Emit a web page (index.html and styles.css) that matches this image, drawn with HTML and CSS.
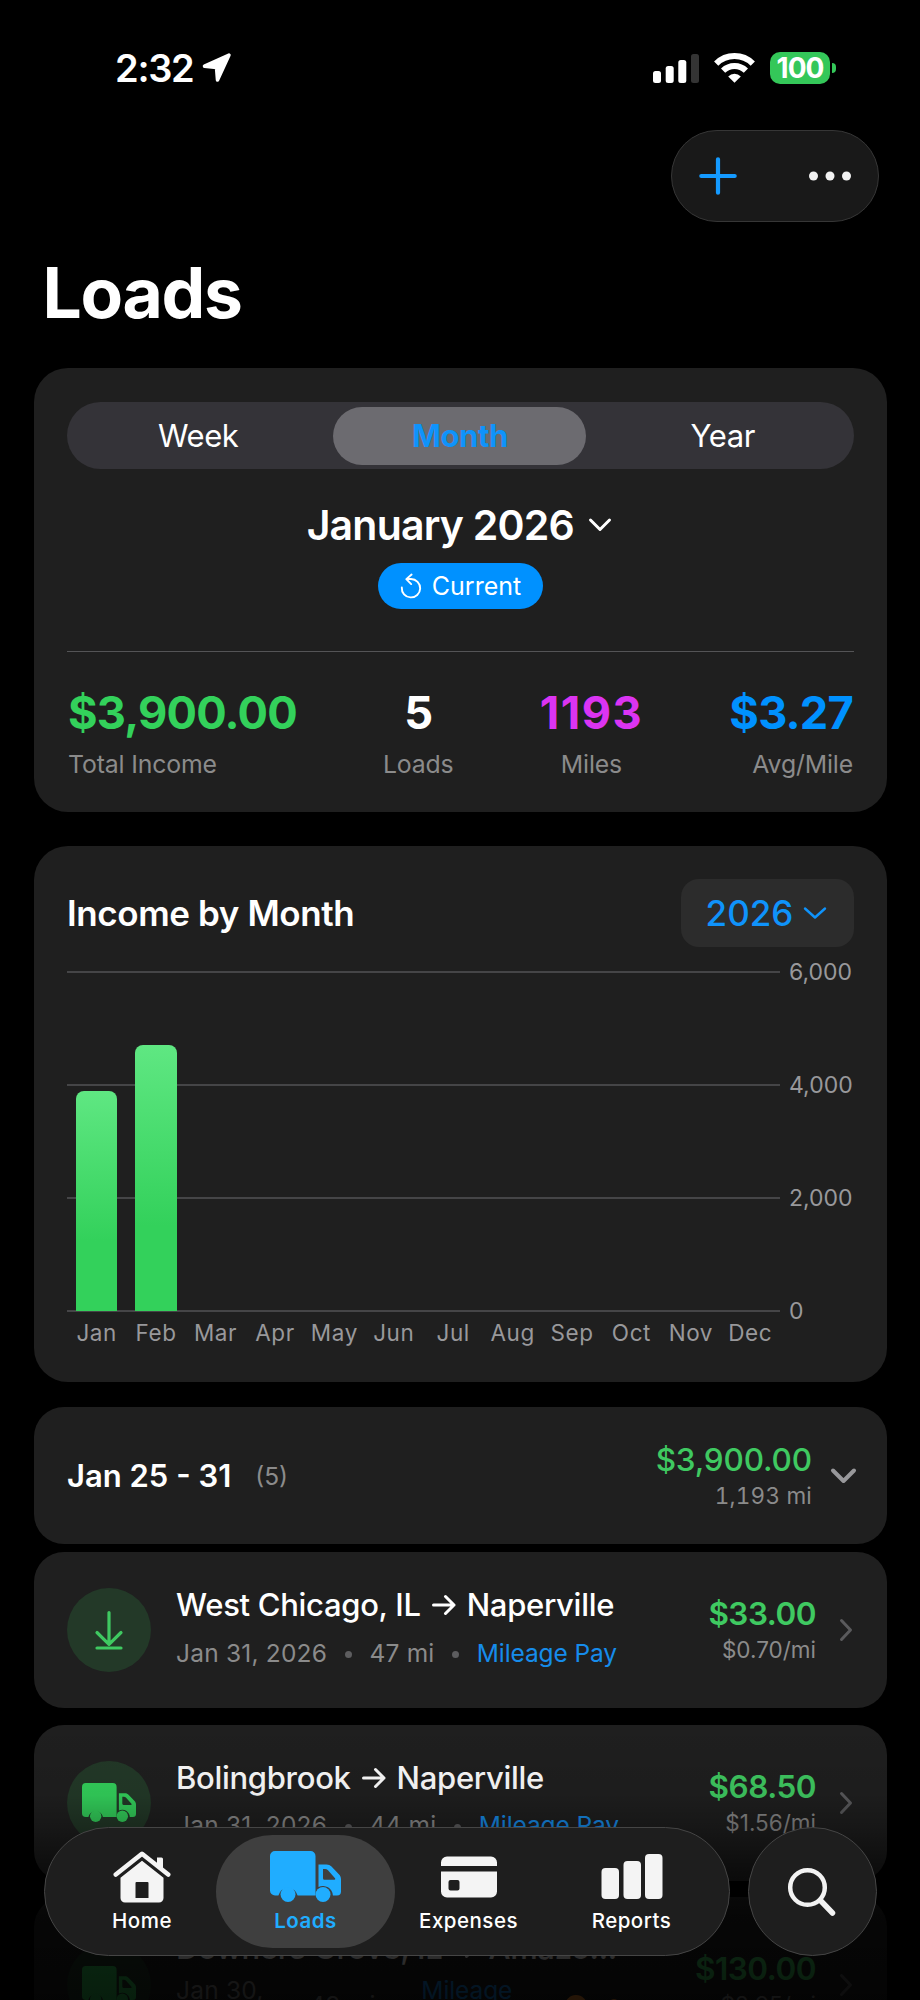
FILE: index.html
```html
<!DOCTYPE html>
<html lang="en">
<head>
<meta charset="utf-8">
<title>Loads</title>
<link rel="stylesheet" href="styles.css">
</head>
<body>
<svg class="defs" width="0" height="0" aria-hidden="true">
  <symbol id="truck" viewBox="0 0 71 51">
    <path fill="currentColor" fill-rule="evenodd" d="M5 0H40.500a5 5 0 0 1 5 5V44.500H27.600A10 10 0 0 0 8.400 44.500H5a5 5 0 0 1-5-5V5a5 5 0 0 1 5-5ZM48.500 13.500H56.500c2 0 3.700.8 5 2.100l7.600 8c1.300 1.400 1.900 2.900 1.900 4.700V40.500a4 4 0 0 1-4 4H62.900A10 10 0 0 0 48.500 36ZM53 18v9.200a1.500 1.500 0 0 0 1.500 1.500H64.500c.8 0 1-.8.5-1.400L58 19.300a4 4 0 0 0-3-1.300Z"/>
    <circle cx="18" cy="43.500" r="7.500" fill="currentColor"/>
    <circle cx="53" cy="43.500" r="7.500" fill="currentColor"/>
  </symbol>
  <symbol id="chev-right" viewBox="0 0 14 24">
    <path d="M2.500 2.500 11.500 12 2.500 21.500" fill="none" stroke="currentColor" stroke-width="3" stroke-linecap="round" stroke-linejoin="round"/>
  </symbol>
  <symbol id="arrow" viewBox="0 0 24 22">
    <path d="M1.500 11H22M13.500 2.500 22 11l-8.500 8.500" fill="none" stroke="currentColor" stroke-width="3" stroke-linecap="round" stroke-linejoin="round"/>
  </symbol>
</svg>

<main class="screen">
  <header class="status">
    <div class="status-left">
      <span class="time">2:32</span>
      <svg width="30" height="30" viewBox="0 0 30 30"><path d="M27 2 2.500 13.200 14.500 14.500 15.500 27Z" fill="#fff" stroke="#fff" stroke-width="3.500" stroke-linejoin="round"/></svg>
    </div>
    <div class="status-right">
      <svg width="46" height="30" viewBox="0 0 46 30"><g fill="#fff"><rect y="18" width="8" height="12" rx="2.500"/><rect x="12.700" y="13" width="8" height="17" rx="2.500"/><rect x="25.300" y="7" width="8" height="23" rx="2.500"/></g><rect x="38" y="1" width="8" height="29" rx="2.500" fill="#343434"/></svg>
      <svg class="wifi" width="41" height="30" viewBox="0 0 41 30"><g fill="none" stroke="#fff" stroke-width="6"><path d="M2.200 10.600a26 26 0 0 1 36.600 0"/><path d="M9.100 17.600a16.300 16.300 0 0 1 22.800 0"/></g><path d="M20.500 29.800 14.200 23.400a9 9 0 0 1 12.600 0Z" fill="#fff"/></svg>
      <div class="battery"><span class="battery-body">100</span><span class="battery-nub"></span></div>
    </div>
  </header>

  <div class="toolbar">
    <div class="toolbar-pill">
      <svg width="38" height="38" viewBox="0 0 38 38"><path d="M19 2.300V35.700M2.300 19H35.700" stroke="#149aff" stroke-width="4.200" stroke-linecap="round"/></svg>
      <svg width="42" height="10" viewBox="0 0 42 10" fill="#f2f2f2"><circle cx="4.500" cy="5" r="4.500"/><circle cx="21" cy="5" r="4.500"/><circle cx="37.500" cy="5" r="4.500"/></svg>
    </div>
  </div>

  <h1 class="title">Loads</h1>

  <section class="card summary">
    <div class="segments">
      <span class="segment">Week</span>
      <span class="segment segment-on">Month</span>
      <span class="segment">Year</span>
    </div>
    <div class="period">
      <span class="period-name">January 2026</span>
      <svg width="24" height="16" viewBox="0 0 24 16"><path d="M2.500 3 12 12.500 21.500 3" fill="none" stroke="#fff" stroke-width="3" stroke-linecap="round" stroke-linejoin="round"/></svg>
    </div>
    <div class="current">
      <svg width="22" height="26" viewBox="0 0 22 26"><path d="M1.800 14.500A9.200 9.200 0 1 0 11 6H6.500M11.600 1.500 6.300 6.100l4.900 5" fill="none" stroke="#fff" stroke-width="1.900" stroke-linecap="round" stroke-linejoin="round"/></svg>
      <span>Current</span>
    </div>
    <div class="divider"></div>
    <div class="stats">
      <div class="stat stat-first"><b class="green">$3,900.00</b><span>Total Income</span></div>
      <div class="stat"><b>5</b><span>Loads</span></div>
      <div class="stat"><b class="purple">1193</b><span>Miles</span></div>
      <div class="stat stat-last"><b class="blue">$3.27</b><span>Avg/Mile</span></div>
    </div>
  </section>

  <section class="card chart-card">
    <div class="chart-head">
      <h2>Income by Month</h2>
      <div class="year"><span>2026</span>
        <svg width="24" height="14" viewBox="0 0 24 14"><path d="M2 2.500 12 11.500 22 2.500" fill="none" stroke="#0f93fb" stroke-width="2.400" stroke-linecap="round" stroke-linejoin="round"/></svg>
      </div>
    </div>
    <div class="chart">
      <div class="plot">
        <div class="lines"><i></i><i></i><i></i><i></i></div>
        <div class="bars">
          <div class="slot"><div class="bar" style="height:220px"></div></div>
          <div class="slot"><div class="bar" style="height:266px"></div></div>
        </div>
      </div>
      <div class="y-axis"><span>6,000</span><span>4,000</span><span>2,000</span><span>0</span></div>
    </div>
    <div class="x-axis"><span>Jan</span><span>Feb</span><span>Mar</span><span>Apr</span><span>May</span><span>Jun</span><span>Jul</span><span>Aug</span><span>Sep</span><span>Oct</span><span>Nov</span><span>Dec</span></div>
  </section>

  <section class="card week">
    <span class="week-name">Jan 25 - 31</span><span class="week-count">(5)</span>
    <div class="week-sum"><b>$3,900.00</b><span class="week-miles">1,193 mi</span></div>
    <svg width="27" height="18" viewBox="0 0 27 18"><path d="M3 3.500 13.500 14 24 3.500" fill="none" stroke="#98989b" stroke-width="4" stroke-linecap="round" stroke-linejoin="round"/></svg>
  </section>

  <article class="card load">
    <div class="badge"><svg width="30" height="40" viewBox="0 0 30 40"><path d="M15 2.500V34M3 22.500 15 34.300 27 22.500M3 38H27" fill="none" stroke="#3fc961" stroke-width="3.200" stroke-linecap="round" stroke-linejoin="round"/></svg></div>
    <div class="load-main">
      <div class="route"><span>West Chicago, IL</span><svg width="24" height="22"><use href="#arrow"/></svg><span>Naperville</span></div>
      <div class="meta"><span>Jan 31, 2026</span><i class="dot"></i><span>47 mi</span><i class="dot"></i><span class="pay">Mileage Pay</span></div>
    </div>
    <div class="price"><b>$33.00</b><span>$0.70/mi</span></div>
    <svg class="chev" width="14" height="24"><use href="#chev-right"/></svg>
  </article>

  <article class="card load">
    <div class="badge"><svg width="54" height="39"><use href="#truck"/></svg></div>
    <div class="load-main">
      <div class="route"><span>Bolingbrook</span><svg width="24" height="22"><use href="#arrow"/></svg><span>Naperville</span></div>
      <div class="meta"><span>Jan 31, 2026</span><i class="dot"></i><span>44 mi</span><i class="dot"></i><span class="pay">Mileage Pay</span></div>
    </div>
    <div class="price"><b>$68.50</b><span>$1.56/mi</span></div>
    <svg class="chev" width="14" height="24"><use href="#chev-right"/></svg>
  </article>

  <article class="card load load-tall">
    <div class="badge"><svg width="54" height="39"><use href="#truck"/></svg></div>
    <div class="load-main">
      <div class="route"><span>Downers Grove, IL</span><svg width="24" height="22"><use href="#arrow"/></svg><span>Amazo...</span></div>
      <div class="meta meta-wrap"><span>Jan 30,<br>2026</span><i class="dot"></i><span>43 mi</span><i class="dot"></i><span class="pay">Mileage<br>Pay</span><svg class="stops" width="60" height="26" viewBox="0 0 60 26"><circle cx="14" cy="12" r="11" fill="#ff9230"/><circle cx="52" cy="10" r="5" fill="#ff9230"/></svg></div>
    </div>
    <div class="price"><b>$130.00</b><span>$2.95/mi</span></div>
    <svg class="chev" width="14" height="24"><use href="#chev-right"/></svg>
  </article>

  <div class="fade"></div>

  <nav class="dock">
    <div class="tabs">
      <div class="tab">
        <svg width="58" height="52" viewBox="0 0 58 52"><path d="M2.800 23.500 29 2.800 55.200 23.500" fill="none" stroke="#f4f4f4" stroke-width="4.600" stroke-linecap="round" stroke-linejoin="round"/><path d="M44 6.500h4.500a1.500 1.500 0 0 1 1.500 1.500V19L44 14Z" fill="#f4f4f4"/><path fill-rule="evenodd" d="M29 9.800 50.500 26.800V47a4.500 4.500 0 0 1-4.500 4.500H12A4.500 4.500 0 0 1 7.500 47V26.800ZM23.500 31a1 1 0 0 0-1 1V47H35.500V32a1 1 0 0 0-1-1Z" fill="#f4f4f4"/></svg>
        <span>Home</span>
      </div>
      <div class="tab tab-on">
        <svg width="71" height="51"><use href="#truck"/></svg>
        <span>Loads</span>
      </div>
      <div class="tab">
        <svg width="56" height="52" viewBox="0 0 56 52"><path d="M6 5.500H50a6 6 0 0 1 6 6V15H0V11.500a6 6 0 0 1 6-6Z" fill="#f4f4f4"/><path fill-rule="evenodd" d="M0 20.500H56V40.500a6 6 0 0 1-6 6H6a6 6 0 0 1-6-6ZM9.500 29a2 2 0 0 0-2 2v6.500a2 2 0 0 0 2 2h7a2 2 0 0 0 2-2V31a2 2 0 0 0-2-2Z" fill="#f4f4f4"/></svg>
        <span>Expenses</span>
      </div>
      <div class="tab">
        <svg width="62" height="52" viewBox="0 0 62 52" fill="#f4f4f4"><rect x=".5" y="17" width="17.500" height="31" rx="4"/><rect x="22.500" y="10" width="17.500" height="38" rx="4"/><rect x="44" y="3" width="17.500" height="45" rx="4"/></svg>
        <span>Reports</span>
      </div>
    </div>
    <div class="search"><svg width="50" height="50" viewBox="0 0 50 50"><circle cx="20.500" cy="20.500" r="17.300" fill="none" stroke="#f2f2f2" stroke-width="4.500"/><path d="M33.500 33.500 45.500 46" stroke="#f2f2f2" stroke-width="5.500" stroke-linecap="round"/></svg></div>
  </nav>
</main>
</body>
</html>
```
FILE: styles.css
```css
* { box-sizing: border-box; }
body { margin: 0; background: #000; }
.defs { display: block; }
svg { flex: none; }

.screen {
  position: relative;
  width: 920px;
  height: 2000px;
  overflow: hidden;
  background: #000;
  color: #fff;
  font-family: Inter, "Liberation Sans", sans-serif;
  white-space: nowrap;
}

.status { display: flex; justify-content: space-between; align-items: center; height: 130px; padding: 6px 84px 0 115px; }
.status-left { display: flex; align-items: center; gap: 9px; }
.time { font-size: 38px; font-weight: 600; line-height: 40px; letter-spacing: -1.300px; }
.status-right { display: flex; align-items: center; }
.wifi { margin: 0 15px 0 15px; }
.battery { display: flex; align-items: center; gap: 2px; }
.battery-body { width: 60px; height: 32px; border-radius: 10px; background: #34c759; font-size: 28px; font-weight: 700; line-height: 32px; text-align: center; letter-spacing: -1px; }
.battery-nub { width: 4px; height: 10px; border-radius: 0 5px 5px 0; background: #34c759; }

.toolbar { display: flex; justify-content: flex-end; padding-right: 41px; }
.toolbar-pill { display: flex; align-items: center; justify-content: space-between; width: 208px; height: 92px; padding: 0 27px 0 26.500px; border: 1.500px solid #363636; border-radius: 46px; background: #191919; }

.title { margin: 0; padding-left: 42.500px; font-size: 69.500px; font-weight: 700; line-height: 142px; letter-spacing: -1.300px; }

.card { margin: 0 33px 0 34px; background: #1f1f1f; border-radius: 34px; }
.summary { height: 444px; margin-top: 4px; padding: 34px 33px 0; }
.segments { display: grid; grid-template-columns: repeat(3, 1fr); align-items: center; height: 67px; border-radius: 34px; background: #343338; font-size: 31px; line-height: 58px; text-align: center; letter-spacing: -.4px; }
.segment-on { justify-self: center; width: 253px; height: 58px; margin-right: 1px; border-radius: 29px; background: #6c6b70; color: #0f93fb; font-weight: 700; }
.period { display: flex; align-items: center; justify-content: center; gap: 14px; height: 50px; margin-top: 31px; padding-right: 2.500px; }
.period-name { font-size: 41px; font-weight: 600; line-height: 50px; letter-spacing: -.8px; }
.current { display: flex; align-items: center; justify-content: center; gap: 10px; width: 165px; height: 46px; margin: 13px auto 0; border-radius: 23px; background: #0091ff; font-size: 25px; line-height: 46px; }
.divider { height: 1px; margin-top: 42px; background: #545456; }
.stats { display: flex; justify-content: space-between; margin-top: 34px; padding: 0 1px; }
.stat { display: flex; flex-direction: column; align-items: center; gap: 9px; color: #8b8b8b; font-size: 24.800px; line-height: 30px; letter-spacing: -.15px; }
.stat b { color: #fff; font-size: 45.200px; line-height: 54px; font-weight: 700; letter-spacing: -.8px; }
.stat-first { align-items: flex-start; }
.stat-last { align-items: flex-end; }
.stat .green { color: #33d15b; }
.stat .purple { color: #db34f2; letter-spacing: 1.500px; }
.stat .blue { color: #0091ff; }

.chart-card { height: 536px; margin-top: 34px; padding: 33px 33px 0; }
.chart-head { display: flex; justify-content: space-between; align-items: center; height: 68px; }
.chart-head h2 { margin: 0; font-size: 35px; font-weight: 600; letter-spacing: -.4px; }
.year { display: flex; align-items: center; justify-content: center; gap: 10px; width: 173px; height: 68px; padding-right: 2px; border-radius: 18px; background: #2c2c2c; color: #0f93fb; font-size: 35px; font-weight: 500; }
.chart { display: flex; gap: 9px; margin-top: 24px; }
.plot { position: relative; width: 713px; height: 341px; }
.lines { position: absolute; inset: 0; display: flex; flex-direction: column; justify-content: space-between; }
.lines i { height: 2px; background: #454547; }
.bars { position: relative; display: grid; grid-template-columns: repeat(12, 1fr); height: 340px; }
.slot { display: flex; align-items: flex-end; justify-content: center; }
.bar { width: 41.500px; border-radius: 8px 8px 0 0; background: linear-gradient(#5fe782, #33d15b 68%); }
.y-axis { display: flex; flex-direction: column; justify-content: space-between; height: 341px; color: #98989b; font-size: 23px; }
.y-axis span { height: 2px; line-height: 2px; }
.x-axis { display: grid; grid-template-columns: repeat(12, 1fr); width: 713px; margin-top: 6px; color: #98989b; font-size: 22.500px; line-height: 30px; text-align: center; letter-spacing: .6px; }

.week { display: flex; align-items: center; height: 137px; margin-top: 25px; padding: 0 30px 0 33px; border-radius: 30px; }
.week-name { font-size: 31px; font-weight: 600; }
.week-count { margin-left: 24px; color: #8b8b8b; font-size: 24.500px; }
.week-sum { display: flex; flex-direction: column; align-items: flex-end; margin-left: auto; margin-right: 18px; color: #8b8b8b; font-size: 22.500px; line-height: 32px; }
.week-sum b { color: #3fc961; font-size: 31.500px; font-weight: 500; line-height: 41px; letter-spacing: -.15px; }
.week-miles { font-variant-numeric: tabular-nums; letter-spacing: .2px; }

.load { display: flex; align-items: center; height: 156px; margin-top: 8px; padding: 0 34px 0 33px; border-radius: 30px; }
.load + .load { margin-top: 16.500px; }
.load-tall { height: 176px; }
.badge { display: flex; align-items: center; justify-content: center; flex: none; width: 84px; height: 84px; border-radius: 50%; background: #233928; color: #33d15b; }
.load-main { margin-left: 25px; padding-bottom: 7px; }
.route { display: flex; align-items: center; gap: 11px; font-size: 31px; font-weight: 500; line-height: 40px; letter-spacing: -.3px; }
.meta { display: flex; align-items: center; margin-top: 12.500px; color: #8b8b8b; font-size: 24.500px; line-height: 30px; letter-spacing: .2px; }
.meta-wrap { margin-top: 7.500px; }
.dot { width: 7px; height: 7px; margin: 4px 17.700px 0; border-radius: 50%; background: #5d5d5f; }
.meta-wrap .dot { margin: 4px 19.400px 0; }
.pay { color: #168ceb; letter-spacing: -.1px; }
.price { display: flex; flex-direction: column; align-items: flex-end; margin-left: auto; margin-right: 23px; color: #8b8b8b; font-size: 22.500px; line-height: 32px; }
.price b { color: #3fc961; font-size: 31.500px; font-weight: 600; line-height: 40px; letter-spacing: -.5px; }
.chev { color: #5a5a5c; }
.stops { margin: 4px 0 0 50px; }

.fade { position: absolute; left: 0; right: 0; top: 1720px; height: 280px; background: linear-gradient(rgba(0,0,0,0), rgba(0,0,0,.08) 27%, rgba(0,0,0,.28) 39%, rgba(0,0,0,.62) 55%, rgba(0,0,0,.8) 70%, rgba(0,0,0,.86)); }

.dock { position: absolute; left: 44px; right: 43.500px; top: 1827px; display: flex; justify-content: space-between; }
.tabs { display: grid; grid-template-columns: 164px repeat(3, 163px); justify-content: center; align-items: center; width: 686px; height: 129px; padding-right: 1px; border: 1.500px solid #454545; border-radius: 65px; background: #1e1e1e; }
.tab { display: flex; flex-direction: column; align-items: center; justify-content: flex-start; gap: 6px; height: 113px; padding-top: 16px; margin: 0 -7.500px; border-radius: 57px; font-size: 20.500px; font-weight: 500; line-height: 24px; letter-spacing: .5px; }
.tab-on { gap: 7px; margin-left: -8.500px; padding-left: 1px; background: #3f3f3f; color: #20adff; font-weight: 600; }
.search { display: flex; align-items: center; justify-content: center; width: 129px; height: 129px; border: 1.500px solid #454545; border-radius: 50%; background: #1e1e1e; }
```
